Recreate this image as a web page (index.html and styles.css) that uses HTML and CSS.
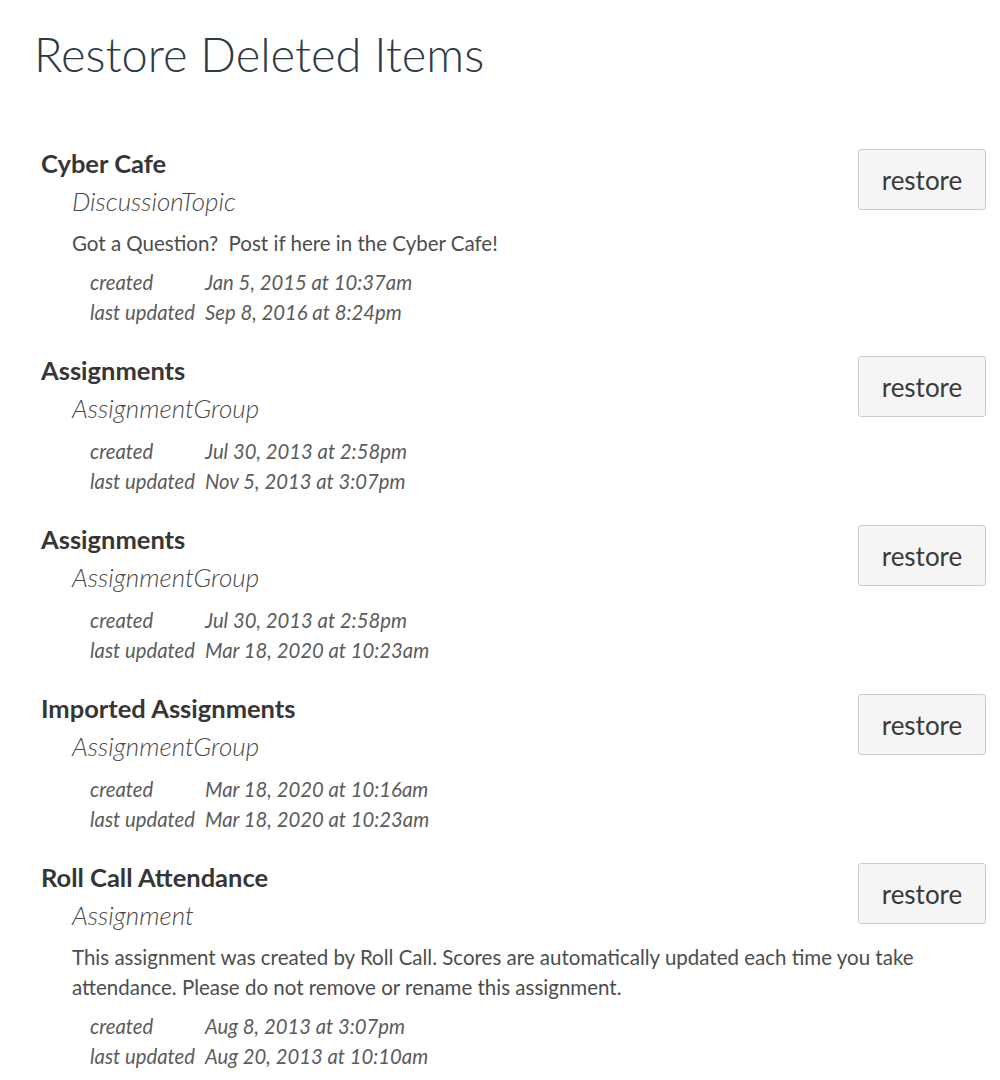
FILE: index.html
```html
<!DOCTYPE html>
<html>
<head>
<meta charset="utf-8">
<link rel="stylesheet" href="styles.css">
</head>
<body>
<div class="page">
  <h1 class="page-title">Restore Deleted Items</h1>
  <ul class="items">
    <li class="item">
      <div class="name">Cyber Cafe</div>
      <div class="type">DiscussionTopic</div>
      <button class="restore">restore</button>
      <div class="desc">Got a Question?&nbsp; Post if here in the Cyber Cafe!</div>
      <div class="meta">
        <span class="label">created</span><span class="date">Jan 5, 2015 at 10:37am</span>
        <span class="label">last updated</span><span class="date">Sep 8, 2016 at 8:24pm</span>
      </div>
    </li>
    <li class="item">
      <div class="name">Assignments</div>
      <div class="type">AssignmentGroup</div>
      <button class="restore">restore</button>
      <div class="meta">
        <span class="label">created</span><span class="date">Jul 30, 2013 at 2:58pm</span>
        <span class="label">last updated</span><span class="date">Nov 5, 2013 at 3:07pm</span>
      </div>
    </li>
    <li class="item">
      <div class="name">Assignments</div>
      <div class="type">AssignmentGroup</div>
      <button class="restore">restore</button>
      <div class="meta">
        <span class="label">created</span><span class="date">Jul 30, 2013 at 2:58pm</span>
        <span class="label">last updated</span><span class="date">Mar 18, 2020 at 10:23am</span>
      </div>
    </li>
    <li class="item">
      <div class="name">Imported Assignments</div>
      <div class="type">AssignmentGroup</div>
      <button class="restore">restore</button>
      <div class="meta">
        <span class="label">created</span><span class="date">Mar 18, 2020 at 10:16am</span>
        <span class="label">last updated</span><span class="date">Mar 18, 2020 at 10:23am</span>
      </div>
    </li>
    <li class="item">
      <div class="name">Roll Call Attendance</div>
      <div class="type">Assignment</div>
      <button class="restore">restore</button>
      <div class="desc">This assignment was created by Roll Call. Scores are automatically updated each time you take attendance. Please do not remove or rename this assignment.</div>
      <div class="meta">
        <span class="label">created</span><span class="date">Aug 8, 2013 at 3:07pm</span>
        <span class="label">last updated</span><span class="date">Aug 20, 2013 at 10:10am</span>
      </div>
    </li>
  </ul>
</div>
</body>
</html>
```

FILE: styles.css
```css
html, body {
  margin: 0;
  padding: 0;
  background: #ffffff;
}
body {
  font-family: Lato, "Open Sans", "Liberation Sans", sans-serif;
  color: #2d3b45;
}
.page {
  padding: 22px 14px 0 34px;
}
.page-title {
  margin: 0;
  font-size: 47px;
  font-weight: 300;
  line-height: 64px;
  color: #2d3b45;
}
.items {
  list-style: none;
  margin: 58px 0 0 7px;
  padding: 0;
}
.item {
  display: grid;
  grid-template-columns: 1fr auto;
  align-items: start;
  margin-bottom: 24px;
}
.name {
  grid-column: 1;
  grid-row: 1;
  font-size: 25.5px;
  font-weight: 700;
  line-height: 38px;
  color: #363636;
}
.type {
  grid-column: 1;
  grid-row: 2;
  margin-left: 31px;
  font-size: 26px;
  font-style: italic;
  font-weight: 300;
  line-height: 38px;
  color: #4a4a4a;
}
.restore {
  grid-column: 2;
  grid-row: 1 / 3;
  margin-top: 5px;
  width: 128px;
  height: 61px;
  background: #f5f5f5;
  border: 1px solid #c7cdd1;
  border-radius: 3px;
  font-family: Lato, "Open Sans", "Liberation Sans", sans-serif;
  font-size: 26px;
  color: #3a3a3a;
  padding: 0;
}
.desc {
  grid-column: 1 / -1;
  margin: 8px 0 0 31px;
  max-width: 870px;
  font-size: 20.5px;
  line-height: 30px;
  color: #4d4d4d;
}
.meta {
  grid-column: 1 / -1;
  display: grid;
  grid-template-columns: 115px auto;
  justify-content: start;
  margin: 9px 0 0 49px;
  font-size: 20.3px;
  font-style: italic;
  line-height: 30px;
  color: #5c5c5c;
}
```
